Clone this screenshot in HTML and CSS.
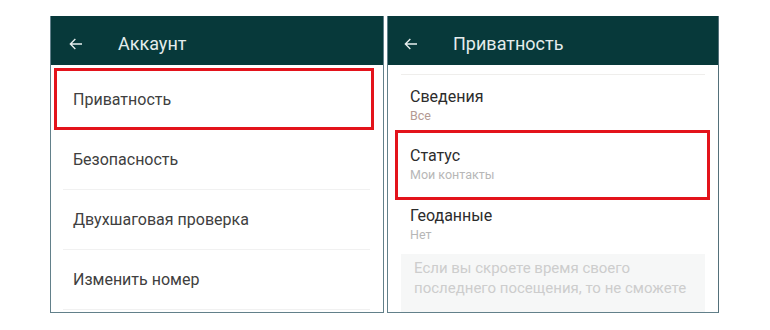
FILE: index.html
```html
<!DOCTYPE html>
<html>
<head>
  <title>Аккаунт и приватность</title>
  <meta charset="utf-8">
  <link rel="stylesheet" href="styles.css">
</head>
<body>

  <div class="screens">

    <!-- Account screen -->
    <div class="phone phone-left">
      <div class="topbar">
        <svg class="back" width="16" height="16" viewBox="0 0 24 24">
          <path d="M21 12H4M11 4.5L3.5 12 11 19.5" fill="none" stroke="#e8efef" stroke-width="2"/>
        </svg>
        <span class="title">Аккаунт</span>
      </div>
      <ul class="menu">
        <li class="item mark">Приватность</li>
        <li class="item">Безопасность</li>
        <li class="item">Двухшаговая проверка</li>
        <li class="item">Изменить номер</li>
      </ul>
    </div>

    <!-- Privacy screen -->
    <div class="phone phone-right">
      <div class="topbar">
        <svg class="back" width="16" height="16" viewBox="0 0 24 24">
          <path d="M21 12H4M11 4.5L3.5 12 11 19.5" fill="none" stroke="#e8efef" stroke-width="2"/>
        </svg>
        <span class="title">Приватность</span>
      </div>
      <div class="options">
        <div class="opt">
          <div class="opt-name">Сведения</div>
          <div class="opt-value value-all">Все</div>
        </div>
        <div class="opt mark">
          <div class="opt-name">Статус</div>
          <div class="opt-value">Мои контакты</div>
        </div>
        <div class="opt">
          <div class="opt-name">Геоданные</div>
          <div class="opt-value">Нет</div>
        </div>
        <div class="hint">
          Если вы скроете время своего последнего посещения, то не сможете
        </div>
      </div>
    </div>

  </div>

</body>
</html>
```

FILE: styles.css
```css
/* General Page Styling */
body {
  font-family: Roboto, "Noto Sans", sans-serif;
  background-color: #fff;
  margin: 0;
  overflow: hidden;
}

/* Two screenshots side by side */
.screens {
  display: flex;
  gap: 3px;
  padding: 16px 0 0 50px;
}

.phone {
  height: 297px;
  background-color: #fff;
  border: 1px solid #62808a;
  border-top: none;
  box-shadow: 0 1px 0 #c4e8ec;
  overflow: hidden;
  box-sizing: border-box;
}

.phone-left {
  width: 334px;
}

.phone-right {
  width: 332px;
  border-right-color: #54707a;
}

/* Dark green title bar */
.topbar {
  height: 49px;
  padding: 6px 0 0 17px;
  box-sizing: border-box;
  background-color: #07393a;
  display: flex;
  align-items: center;
  gap: 34px;
}

.phone-right .topbar {
  padding-left: 15px;
}

.back {
  flex-shrink: 0;
}

.title {
  color: #e4ecec;
  font-size: 18px;
}

/* Account menu */
.menu {
  list-style-type: none;
  margin: 0;
  padding: 3px 9px 0 3px;
}

.item {
  height: 60px;
  display: flex;
  align-items: center;
  margin: 0 4px 0 9px;
  padding-left: 10px;
  border-bottom: 1px solid #f1f1f1;
  box-sizing: border-box;
  font-size: 16px;
  color: #404040;
}

.item.mark {
  height: 62px;
  margin: 0;
  padding-left: 16px;
  border: 3px solid #e3131b;
}

/* Privacy options */
.options {
  padding: 9px 13px 0 13px;
}

.options .opt:first-child {
  border-top: 1px solid #efeeec;
}

.opt {
  position: relative;
  height: 60px;
  padding: 12px 0 0 9px;
  box-sizing: border-box;
}

.opt-name {
  font-size: 16px;
  color: #2c2c2c;
  line-height: 19px;
}

.opt-value {
  font-size: 12.5px;
  color: #b7b7b7;
  line-height: 19px;
}

.opt-value.value-all {
  color: #b49a93;
}

/* red frame drawn over the row */
.opt.mark::after {
  content: "";
  position: absolute;
  top: -4px;
  bottom: -6px;
  left: -6px;
  right: -5px;
  border: 3px solid #e3131b;
}

.hint {
  background-color: #f6f7f7;
  padding: 4px 0 20px 13px;
  font-size: 15px;
  line-height: 20px;
  color: #cdcdcd;
}
```
